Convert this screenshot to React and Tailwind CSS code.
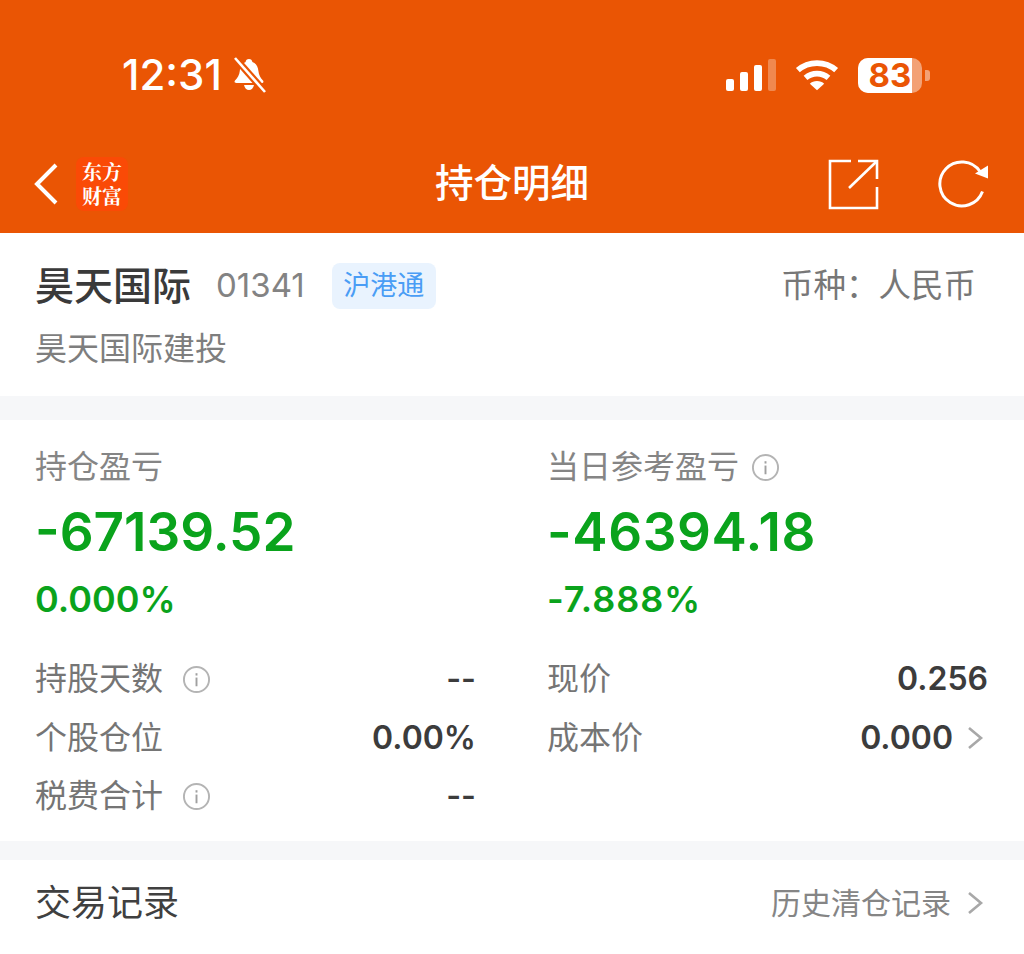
import React from "react";

const FONT = "font-['Inter','Noto_Sans_CJK_SC',sans-serif]";

const InfoIcon = () => (
  <svg width="29" height="29" viewBox="0 0 30 30" fill="none" className="shrink-0">
    <circle cx="15" cy="15" r="13" stroke="#b4b4b4" strokeWidth="2" />
    <rect x="14" y="13" width="2" height="9" fill="#a0a0a0" />
    <rect x="14" y="8.5" width="2" height="2.4" fill="#a0a0a0" />
  </svg>
);

const Chevron = () => (
  <svg width="18" height="26" viewBox="0 0 18 26" fill="none" className="shrink-0">
    <path d="M3 3 L15 13 L3 23" stroke="#a8a8a8" strokeWidth="2.6" />
  </svg>
);

const StatusBar = () => (
  <div className="h-[140px] flex items-start justify-between pl-[122px] pr-[94px] pt-[52px] text-white">
    <div className="flex items-center gap-[10px] h-[46px]">
      <span className="text-[42px] leading-[46px] font-medium">12:31</span>
      <svg width="34" height="36" viewBox="0 0 34 36" fill="white">
        <path d="M17 2c2 0 3 1 3.400 3 4 1.500 5.600 5 6 9 .4 4 2 6.600 4.600 9.600 1 1.400.2 2.400-1.400 2.400H4.400c-1.800 0-2.400-1-1.400-2.400 2.600-3 4.400-5.600 4.800-9.600.4-4 2-7.500 5.800-9C13.800 3 15 2 17 2z" />
        <path d="M12 28h10c-.6 3-2.600 5-5 5s-4.400-2-5-5z" />
        <path d="M3 1 L33 35" stroke="#ea5504" strokeWidth="7" />
        <path d="M3 1 L33 35" stroke="white" strokeWidth="2.600" />
      </svg>
    </div>
    <div className="flex items-center gap-[19px] h-[46px]">
      <div className="flex items-end gap-[6px] h-[32px]">
        <div className="w-[8px] h-[12px] rounded-[2px] bg-white" />
        <div className="w-[8px] h-[19px] rounded-[2px] bg-white" />
        <div className="w-[8px] h-[26px] rounded-[2px] bg-white" />
        <div className="w-[8px] h-[32px] rounded-[2px] bg-white/30" />
      </div>
      <svg width="44" height="33" viewBox="0 0 46 33" fill="none" stroke="white" strokeWidth="6">
        <path d="M3 11 C14 1 32 1 43 11" />
        <path d="M11 19 C18 13 28 13 35 19" />
        <path d="M23 32 L15.500 25 C19 21.500 27 21.500 30.500 25 Z" fill="white" stroke="none" />
      </svg>
      <div className="flex items-center gap-[3px]">
        <div className="relative w-[64px] h-[35px] rounded-[10px] bg-white/45">
          <div className="w-[54px] h-full rounded-l-[10px] bg-white" />
          <span className="absolute inset-0 text-center text-[33px] leading-[35px] font-bold text-[#ea5504]">
            83
          </span>
        </div>
        <div className="w-[5px] h-[11px] rounded-r-[3px] bg-white/45" />
      </div>
    </div>
  </div>
);

const NavBar = () => (
  <div className="relative h-[93px] flex items-center justify-between pl-[33px] pr-[34px] pb-[6px]">
    <div className="flex items-center gap-[17px]">
      <svg width="26" height="44" viewBox="0 0 26 44" fill="none">
        <path d="M23 3 L4 22 L23 41" stroke="white" strokeWidth="4" />
      </svg>
      <div className="w-[52px] h-[54px] rounded-[8px] bg-[#fa4a06] flex items-center justify-center text-center font-['Noto_Serif_CJK_SC','Noto_Sans_CJK_SC',serif] text-white text-[20px] leading-[24px] font-bold">
        <span>
          东方
          <br />
          财富
        </span>
      </div>
    </div>
    <h1 className="absolute inset-x-0 top-[18px] text-center text-[38.5px] leading-[50px] text-white font-medium">持仓明细</h1>
    <div className="flex items-center gap-[58px]">
      <svg width="52" height="52" viewBox="0 0 52 52" fill="none" stroke="white" strokeWidth="2.600">
        <path d="M23 3 H2 V50 H49 V29" />
        <path d="M21 30 L48 4" />
        <path d="M30 3 H49 V21" />
      </svg>
      <svg width="52" height="52" viewBox="0 0 52 52" fill="none">
        <path d="M44.500 33.500 A22 22 0 1 1 42 13.500" stroke="white" strokeWidth="3" />
        <path d="M50 7.500 V20.500 L37 15.500 Z" fill="white" />
      </svg>
    </div>
  </div>
);

const Metric = ({ label, value, percent, info, valueClass, percentClass }) => (
  <div className="w-[512px] pl-[35px] flex flex-col">
    <div className="flex items-center gap-[12px] h-[36px] text-[32px] leading-[36px] text-[#858585]">
      <span>{label}</span>
      {info && <InfoIcon />}
    </div>
    <div className={`mt-[18px] h-[58px] text-[53px] leading-[58px] font-semibold text-[#0aa31c] ${valueClass || ""}`}>{value}</div>
    <div className={`mt-[16px] h-[44px] text-[36px] leading-[44px] font-semibold text-[#0aa31c] ${percentClass || ""}`}>{percent}</div>
  </div>
);

const Row = ({ label, value, info, chevron }) => (
  <div className="flex items-center justify-between h-[36px]">
    <div className="flex items-center gap-[19px] text-[32px] leading-[36px] text-[#757575]">
      <span>{label}</span>
      {info && <InfoIcon />}
    </div>
    <div className="flex items-center gap-[13px] text-[32px] leading-[36px] font-semibold text-[#3c3c3c]">
      <span>{value}</span>
      {chevron && (
        <div className="mr-[4px]">
          <Chevron />
        </div>
      )}
    </div>
  </div>
);

const App = () => {
  return (
    <div className={`w-[1024px] h-[954px] overflow-hidden bg-[#f6f7f9] ${FONT}`}>
      <div className="h-[233px] bg-[#ea5504]">
        <StatusBar />
        <NavBar />
      </div>

      <section className="h-[163px] bg-white pl-[35px] pr-[36px] pt-[29px] border-t border-white">
        <div className="flex items-center justify-between h-[46px]">
          <div className="flex items-center">
            <span className="text-[39px] leading-[46px] font-medium text-[#3a3a3a]">昊天国际</span>
            <span className="ml-[25px] text-[33px] text-[#838383]">01341</span>
            <span className="ml-[27px] w-[104px] h-[46px] rounded-[8px] bg-[#e9f3fe] text-[#4a9df5] text-[27px] flex items-center justify-center">
              沪港通
            </span>
          </div>
          <span className="mr-[12px] text-[32.5px] text-[#777777]">币种：人民币</span>
        </div>
        <div className="mt-[21px] text-[32px] leading-[38px] text-[#7e7e7e]">昊天国际建投</div>
      </section>

      <section className="mt-[24px] h-[421px] bg-white pt-[29px]">
        <div className="flex">
          <Metric label="持仓盈亏" value="-67139.52" percent="0.000%" />
          <Metric
            label="当日参考盈亏"
            value="-46394.18"
            percent="-7.888%"
            info
            valueClass="tracking-[0.6px]"
            percentClass="tracking-[0.9px]"
          />
        </div>
        <div className="mt-[40px] flex">
          <div className="w-[512px] pl-[35px] pr-[36px] flex flex-col gap-[22.5px]">
            <Row label="持股天数" value="--" info />
            <Row label="个股仓位" value="0.00%" />
            <Row label="税费合计" value="--" info />
          </div>
          <div className="w-[512px] pl-[35px] pr-[36px] flex flex-col gap-[22.5px]">
            <Row label="现价" value="0.256" />
            <Row label="成本价" value="0.000" chevron />
          </div>
        </div>
      </section>

      <section className="mt-[19px] h-[94px] bg-white pl-[35px] pr-[40px] pb-[8px] flex items-center justify-between">
        <span className="text-[36px] font-normal text-[#404040]">交易记录</span>
        <div className="flex items-center gap-[15px]">
          <span className="text-[30px] text-[#858585]">历史清仓记录</span>
          <Chevron />
        </div>
      </section>
    </div>
  );
};

export default App;
